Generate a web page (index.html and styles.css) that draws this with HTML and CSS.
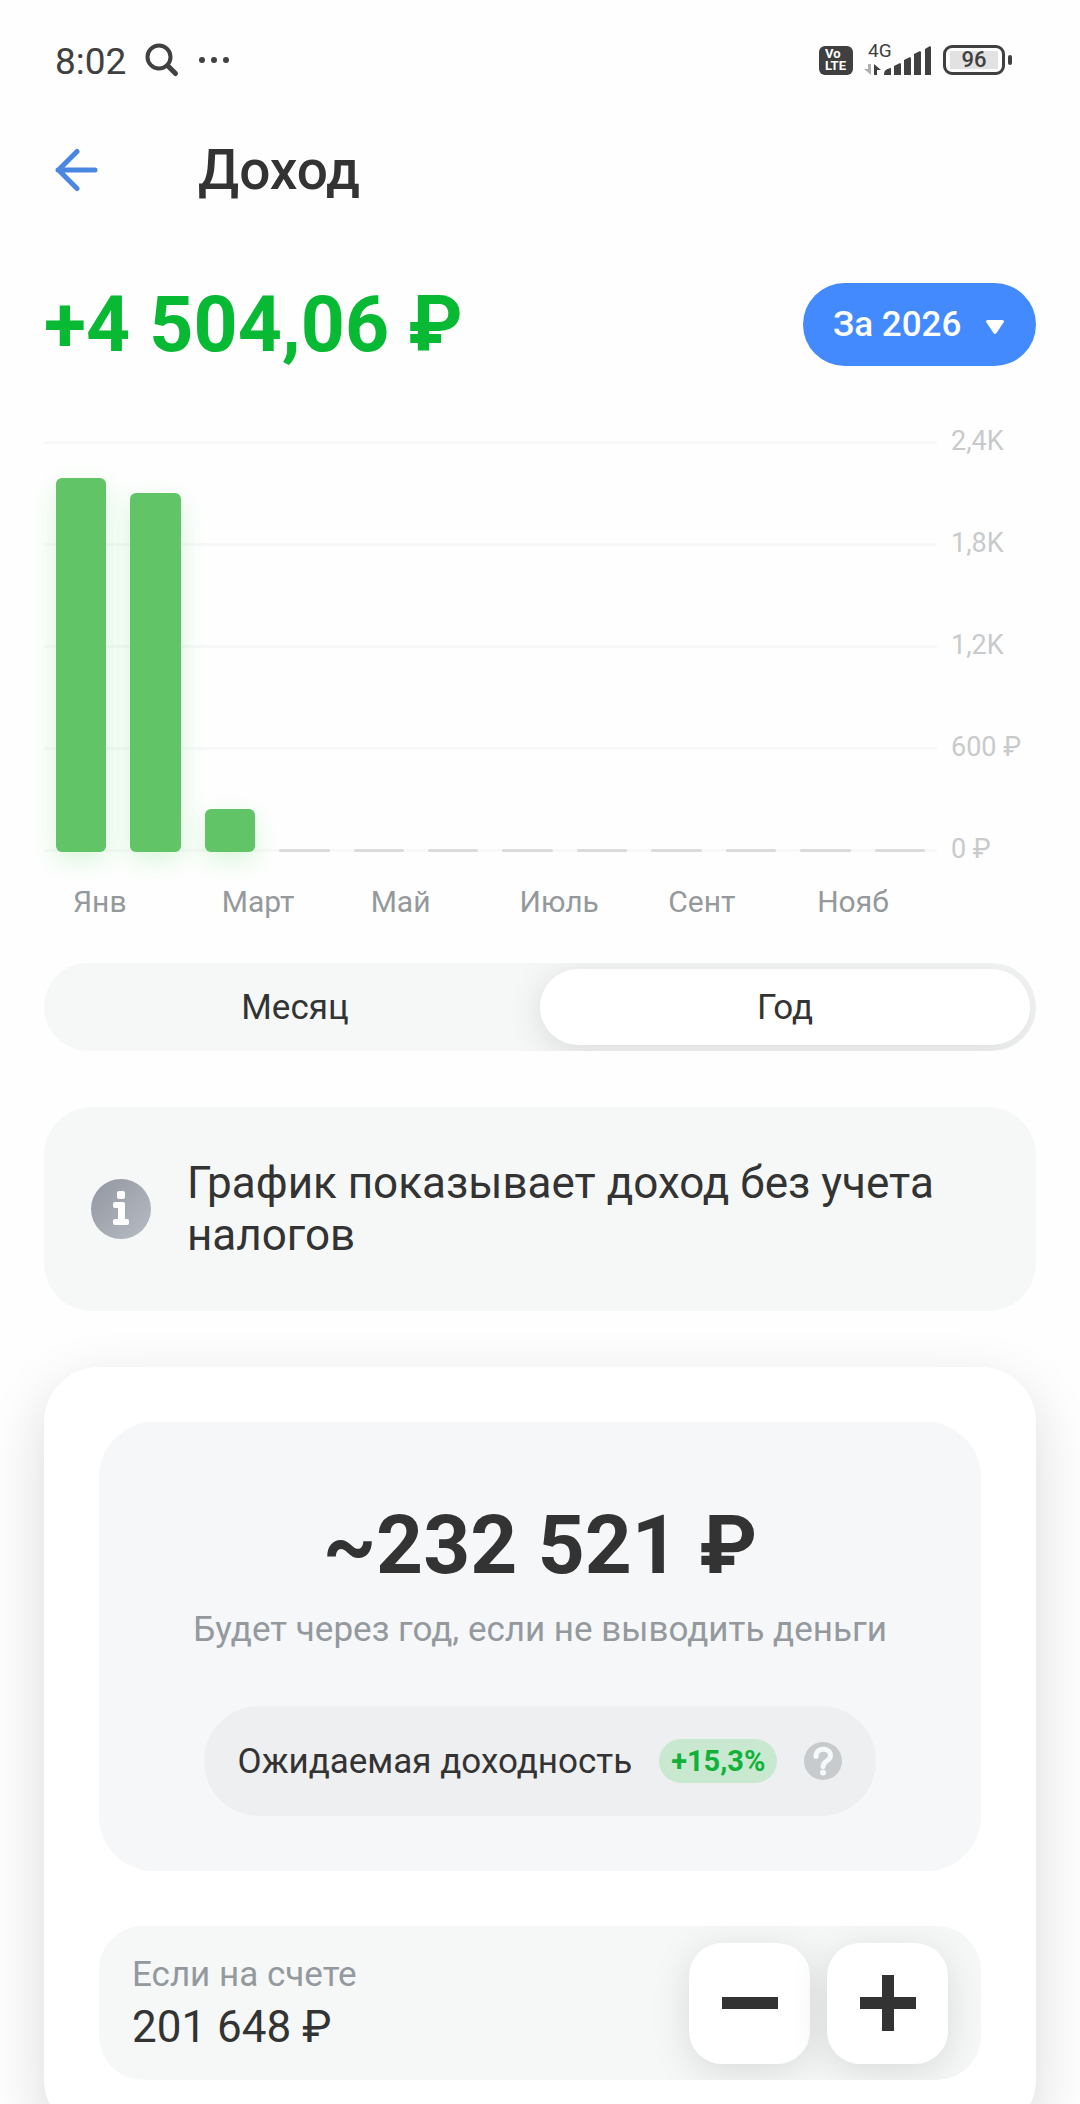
FILE: index.html
```html
<!DOCTYPE html>
<html lang="ru">
<head>
    <meta charset="UTF-8">
    <meta name="viewport" content="width=device-width, initial-scale=1.0">
    <title>Доход</title>
    <link rel="stylesheet" href="styles.css">
</head>
<body>
    <div class="status-bar">
        <div class="status-left">
            <span class="clock">8:02</span>
            <svg class="status-search" width="36" height="36" viewBox="0 0 36 36" fill="none" stroke="#404040" stroke-linecap="round">
                <circle cx="15" cy="15" r="11.5" stroke-width="4"/>
                <path d="M23.5 23.5L31.5 31.5" stroke-width="5"/>
            </svg>
            <svg width="32" height="8" viewBox="0 0 32 8" fill="#404040">
                <circle cx="4" cy="4" r="3"/>
                <circle cx="16" cy="4" r="3"/>
                <circle cx="28" cy="4" r="3"/>
            </svg>
        </div>
        <div class="status-right">
            <span class="volte"><span>Vo</span><span>LTE</span></span>
            <svg class="signal" width="68" height="44" viewBox="0 -4 68 44" fill="#404040">
                <text x="4" y="15" font-size="19">4G</text>
                <path d="M7 22v11l-7-6h4v-5z" fill="#b0b0b0"/>
                <path d="M10 33V22l7 6h-4v5z"/>
                <path d="M20 33v-1q0-5 7-6v7z"/>
                <path d="M30 33V24l6-3 1 1v11z"/>
                <path d="M40 33V18l6-3 1 1v17z"/>
                <path d="M50 33V12l6-3 1 1v23z"/>
                <path d="M61 33V7l5-3 1 1v28z"/>
            </svg>
            <span class="battery"><span class="battery-level">96</span></span>
        </div>
    </div>

    <header class="header">
        <button class="back-btn" type="button" aria-label="Назад">
            <svg width="44" height="44" viewBox="0 0 44 44" fill="none" stroke="#4a87e2" stroke-width="5" stroke-linecap="round" stroke-linejoin="round">
                <path d="M40 22H3M22 3.5L3.5 22L22 40.5"/>
            </svg>
        </button>
        <h1>Доход</h1>
    </header>

    <main class="content">
        <div class="summary">
            <div class="total">+4 504,06 ₽</div>
            <div class="period">
                <select class="period-select" aria-label="Период">
                    <option>За 2026</option>
                    <option>За 2025</option>
                </select>
                <svg class="period-arrow" width="20" height="16" viewBox="0 0 20 16" fill="#fff">
                    <path d="M3 1h14q3 0 1.5 2.5L11.5 14q-1.5 2-3 0L1.5 3.5Q0 1 3 1z"/>
                </svg>
            </div>
        </div>

        <!-- Income by month -->
        <div class="chart">
            <div class="grid">
                <div class="grid-row"><i></i><span>2,4K</span></div>
                <div class="grid-row"><i></i><span>1,8K</span></div>
                <div class="grid-row"><i></i><span>1,2K</span></div>
                <div class="grid-row"><i></i><span>600 ₽</span></div>
                <div class="grid-row"><i></i><span>0 ₽</span></div>
            </div>
            <div class="bars">
                <div class="bar" style="height: 91%"></div>
                <div class="bar" style="height: 87.4%"></div>
                <div class="bar" style="height: 10.5%"></div>
                <div class="bar empty"></div>
                <div class="bar empty"></div>
                <div class="bar empty"></div>
                <div class="bar empty"></div>
                <div class="bar empty"></div>
                <div class="bar empty"></div>
                <div class="bar empty"></div>
                <div class="bar empty"></div>
                <div class="bar empty"></div>
            </div>
            <div class="months">
                <span>Янв</span>
                <span>Март</span>
                <span>Май</span>
                <span>Июль</span>
                <span>Сент</span>
                <span>Нояб</span>
            </div>
        </div>

        <div class="segmented">
            <button class="segment" type="button" aria-pressed="false">Месяц</button>
            <button class="segment active" type="button" aria-pressed="true">Год</button>
        </div>

        <div class="info">
            <svg class="info-icon" width="60" height="60" viewBox="0 0 60 60">
                <defs>
                    <linearGradient id="infoFill" x1="0" y1="0" x2="1" y2="1">
                        <stop offset="0" stop-color="#9196a0"/>
                        <stop offset="1" stop-color="#b8bcc4"/>
                    </linearGradient>
                </defs>
                <circle cx="30" cy="30" r="30" fill="url(#infoFill)"/>
                <rect x="26" y="12" width="8" height="8" rx="2" fill="#fff"/>
                <path d="M24 23h8q2 0 2 2v15h2q2 0 2 2v2q0 2-2 2H24q-2 0-2-2v-2q0-2 2-2h3V29h-3q-2 0-2-2v-2q0-2 2-2z" fill="#fff"/>
            </svg>
            <p>График показывает доход без учета налогов</p>
        </div>

        <section class="card">
            <div class="forecast">
                <div class="forecast-sum">~232 521 ₽</div>
                <p class="forecast-note">Будет через год, если не выводить деньги</p>
                <div class="yield">
                    <span>Ожидаемая доходность</span>
                    <span class="badge">+15,3%</span>
                    <button class="help-btn" type="button" aria-label="Справка">
                        <svg width="38" height="38" viewBox="0 0 38 38">
                            <circle cx="19" cy="19" r="19" fill="#c7cbce"/>
                            <path d="M12 14.5C12 4.5 26.5 5.5 26.5 13.5C26.5 19.5 19 18.5 19 24.5" fill="none" stroke="#f7f8f9" stroke-width="5" stroke-linecap="round"/>
                            <circle cx="19" cy="30.5" r="3" fill="#f7f8f9"/>
                        </svg>
                    </button>
                </div>
            </div>

            <div class="account">
                <div class="account-text">
                    <div class="account-label">Если на счете</div>
                    <div class="account-sum">201 648 ₽</div>
                </div>
                <div class="stepper">
                    <button class="step-btn" type="button" aria-label="Уменьшить">
                        <svg width="56" height="56" viewBox="0 0 56 56" fill="#333"><path d="M0 22h56v12H0z"/></svg>
                    </button>
                    <button class="step-btn" type="button" aria-label="Увеличить">
                        <svg width="56" height="56" viewBox="0 0 56 56" fill="#333"><path d="M0 22h22V0h12v22h22v12H34v22H22V34H0z"/></svg>
                    </button>
                </div>
            </div>
        </section>
    </main>
</body>
</html>
```

FILE: styles.css
```css
* {
    box-sizing: border-box;
}
body {
    margin: 0;
    height: 100vh;
    display: flex;
    flex-direction: column;
    overflow: hidden;
    background: #fefefe;
    color: #333;
    font-family: Roboto, "Liberation Sans", sans-serif;
}
h1, p {
    margin: 0;
}
button {
    border: none;
    padding: 0;
    background: none;
    color: inherit;
    font-family: inherit;
    cursor: pointer;
}
svg {
    display: block;
    flex-shrink: 0;
}

/* Status bar */
.status-bar {
    flex-shrink: 0;
    height: 120px;
    padding: 0 75px 0 55px;
    display: flex;
    align-items: center;
    justify-content: space-between;
    color: #404040;
}
.status-left {
    display: flex;
    align-items: center;
    gap: 18px;
}
.clock {
    font-size: 37px;
    line-height: 44px;
    padding-top: 4px;
}
.status-right {
    display: flex;
    align-items: center;
    gap: 11px;
}
.volte {
    width: 34px;
    height: 29px;
    border-radius: 6px;
    background: #404040;
    color: #fff;
    display: flex;
    flex-direction: column;
    justify-content: center;
    padding-left: 6px;
    font-size: 13px;
    line-height: 12px;
    font-weight: 700;
}
.battery {
    position: relative;
    width: 62px;
    height: 30px;
    padding: 3px 4px;
    border: 3px solid #404040;
    border-radius: 9px;
}
.battery::after {
    content: "";
    position: absolute;
    right: -10px;
    top: 7px;
    width: 4px;
    height: 10px;
    border-radius: 2px;
    background: #404040;
}
.battery-level {
    display: block;
    background: #e2e2e2;
    font-size: 22px;
    line-height: 18px;
    font-weight: 500;
    text-align: center;
}

/* Header */
.header {
    flex-shrink: 0;
    height: 100px;
    padding: 0 55px;
    display: flex;
    align-items: center;
    gap: 99px;
}
.header h1 {
    font-size: 55px;
    line-height: 64px;
    font-weight: 500;
}

.content {
    flex: 1;
    min-height: 0;
    padding: 63px 44px 55px;
    overflow-y: auto;
    scrollbar-width: none;
}

/* Total and period */
.summary {
    display: flex;
    align-items: center;
    justify-content: space-between;
    height: 83px;
}
.total {
    font-size: 77px;
    font-weight: 700;
    color: #07b933;
}
.period {
    position: relative;
}
.period-select {
    appearance: none;
    height: 83px;
    padding: 0 74px 0 30px;
    border: none;
    border-radius: 42px;
    background: #448aff;
    color: #fff;
    font-family: inherit;
    font-size: 35px;
    font-weight: 500;
}
.period-arrow {
    position: absolute;
    right: 31px;
    top: 36px;
    pointer-events: none;
}

/* Chart */
.chart {
    display: grid;
    grid-template-columns: 1fr 99px;
    margin-top: 60px;
}
.grid {
    grid-area: 1 / 1 / 2 / 3;
    display: flex;
    flex-direction: column;
    gap: 70px;
}
.grid-row {
    display: flex;
    align-items: center;
    gap: 14px;
    height: 32px;
}
.grid-row i {
    flex: 1;
    height: 3px;
    background: #f7f8f8;
}
.grid-row span {
    width: 85px;
    padding-bottom: 2px;
    font-size: 27px;
    line-height: 28px;
    color: #c8cacb;
    white-space: nowrap;
}
.bars {
    grid-area: 1 / 1 / 2 / 2;
    display: grid;
    grid-template-columns: repeat(12, 1fr);
    align-items: end;
    margin: 15px 0 14px;
}
.bar {
    margin: 0 12px;
    border-radius: 6px;
    background: #61c467;
    box-shadow: 0 8px 24px rgba(97, 220, 103, 0.24);
}
.bar.empty {
    height: 3px;
    border-radius: 2px;
    background: #dadbdb;
    box-shadow: none;
}
.months {
    grid-area: 2 / 1 / 3 / 2;
    display: grid;
    grid-template-columns: repeat(6, 1fr);
    margin-top: 18px;
    font-size: 30px;
    line-height: 36px;
    color: #95999b;
}
.months span {
    padding-left: 29px;
}

/* Month / year switch */
.segmented {
    display: flex;
    height: 88px;
    margin-top: 43px;
    padding: 6px;
    border-radius: 44px;
    background: #f6f8f8;
    overflow: hidden;
}
.segment {
    flex: 1;
    border-radius: 38px;
    font-size: 35px;
}
.segment.active {
    background: #fff;
    box-shadow: 0 6px 36px rgba(0, 0, 0, 0.12);
}

/* Info */
.info {
    display: flex;
    align-items: center;
    gap: 36px;
    margin-top: 56px;
    padding: 50px 47px;
    border-radius: 48px;
    background: #f6f8f8;
    font-size: 44px;
    line-height: 52px;
}

/* Forecast card */
.card {
    margin-top: 56px;
    padding: 55px;
    border-radius: 55px;
    background: #fff;
    box-shadow: 0 20px 60px rgba(0, 0, 0, 0.14);
}
.forecast {
    display: flex;
    flex-direction: column;
    align-items: center;
    padding: 73px 33px 55px;
    border-radius: 55px;
    background: #f5f7f9;
    text-align: center;
}
.forecast-sum {
    font-size: 82px;
    line-height: 100px;
    font-weight: 700;
}
.forecast-note {
    margin-top: 13px;
    font-size: 35px;
    line-height: 44px;
    color: #94999d;
}
.yield {
    display: flex;
    align-items: center;
    gap: 27px;
    height: 110px;
    margin-top: 54px;
    padding: 0 34px;
    border-radius: 55px;
    background: #eeeff1;
    font-size: 35px;
}
.badge {
    padding: 0 12px;
    border-radius: 22px;
    background: #c8e9d0;
    color: #12b13a;
    font-size: 29px;
    line-height: 44px;
    font-weight: 700;
}
.account {
    display: flex;
    align-items: center;
    justify-content: space-between;
    height: 154px;
    margin-top: 55px;
    padding: 0 33px;
    border-radius: 44px;
    background: #f6f8f8;
    overflow: hidden;
}
.account-label {
    font-size: 35px;
    line-height: 44px;
    color: #94999d;
}
.account-sum {
    margin-top: 4px;
    font-size: 44px;
    line-height: 52px;
}
.stepper {
    display: flex;
    gap: 17px;
}
.step-btn {
    display: flex;
    align-items: center;
    justify-content: center;
    width: 121px;
    height: 121px;
    border-radius: 33px;
    background: #fff;
    box-shadow: 0 8px 40px rgba(0, 0, 0, 0.12);
}
```
